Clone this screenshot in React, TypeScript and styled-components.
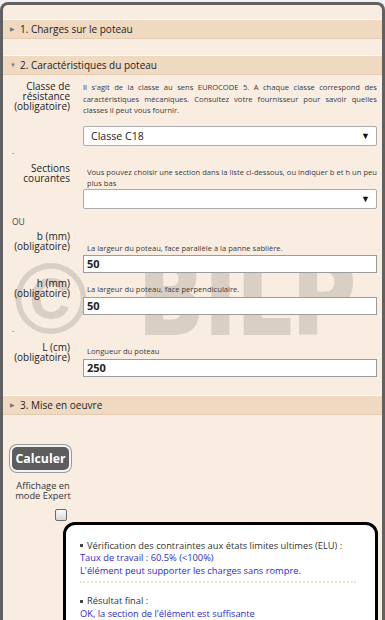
import styled, { createGlobalStyle } from 'styled-components'

const GlobalStyle = createGlobalStyle`
  html, body {
    margin: 0;
    padding: 0;
    background: #f2f2f2;
  }
  body {
    font-family: 'Open Sans', 'Liberation Sans', sans-serif;
    color: #333;
  }
`

const Frame = styled.div`
  position: relative;
  box-sizing: border-box;
  width: 385px;
  height: 618px;
  margin-top: 2px;
  padding-top: 14px;
  border: 3px solid #616161;
  border-bottom: none;
  border-radius: 8px 8px 0 0;
  background: #f9ede2;
  overflow: hidden;
`

// watermark lies behind the form fields
const Mark = styled.span<{
  $left: number
  $top: number
  $size: number
  $font: string
  $scale?: number
  $stroke?: number
}>`
  position: absolute;
  left: ${(p) => p.$left}px;
  top: ${(p) => p.$top}px;
  z-index: 0;
  font-family: ${(p) => p.$font}, sans-serif;
  font-weight: bold;
  font-size: ${(p) => p.$size}px;
  line-height: 1;
  color: #dacfc4;
  -webkit-text-stroke: ${(p) => p.$stroke ?? 0}px #dacfc4;
  transform: scaleX(${(p) => p.$scale ?? 1});
  transform-origin: left top;
  pointer-events: none;
`

const Content = styled.div`
  position: relative;
  z-index: 1;
`

const Header = styled.div<{ $gap?: number }>`
  display: flex;
  align-items: center;
  gap: 4px;
  height: 18px;
  margin-top: ${(p) => p.$gap ?? 0}px;
  padding-left: 7px;
  border-top: 1px solid #fff8f0;
  border-bottom: 1px solid #e4ccb2;
  background: #f0d9c1;
  font-size: 10px;
  color: #222;
`

const Arrow = styled.span`
  font-size: 6px;
  color: #777;
  width: 6px;
`

const Section = styled.div`
  padding: 6px 5px 18px 0;
`

const Row = styled.div<{ $top?: number }>`
  display: grid;
  grid-template-columns: 67px 1fr;
  column-gap: 13px;
  margin-top: ${(p) => p.$top ?? 0}px;
`

const Label = styled.div`
  text-align: right;
  font-size: 10px;
  line-height: 10px;
  color: #222;
`

const Field = styled.div`
  display: flex;
  flex-direction: column;
`

const Desc = styled.div<{ $pad?: number; $gap: number; $top?: number; $lh?: number }>`
  padding-left: ${(p) => p.$pad ?? 0}px;
  margin-top: ${(p) => p.$top ?? 0}px;
  margin-bottom: ${(p) => p.$gap}px;
  font-size: 7.6px;
  line-height: ${(p) => p.$lh ?? 11}px;
  color: #3a3a3a;
  text-align: justify;
`

const SelectBox = styled.div`
  box-sizing: border-box;
  display: flex;
  align-items: center;
  justify-content: space-between;
  height: 20px;
  padding: 0 6px 0 7px;
  border: 1px solid #ababab;
  border-radius: 2px;
  background: #fff;
  font-size: 10.6px;
  color: #222;
`

const Caret = styled.span`
  font-size: 9px;
  color: #111;
`

const TextInput = styled.input`
  box-sizing: border-box;
  width: 100%;
  height: 18px;
  margin: 0;
  padding: 0 3px;
  border: 1px solid #9c9c9c;
  background: #fff;
  font-family: 'Open Sans', sans-serif;
  font-weight: bold;
  font-size: 11px;
  color: #222;
  outline: none;
`

const Note = styled.div<{ $top?: number }>`
  margin-top: ${(p) => p.$top ?? 0}px;
  padding-left: 9px;
  font-size: 8.5px;
  line-height: 10px;
  color: #444;
`

const Bottom = styled.div`
  display: grid;
  grid-template-columns: 60px 1fr;
  padding: 30px 4px 0 0;
`

const Side = styled.div`
  display: flex;
  flex-direction: column;
  align-items: flex-start;
`

const CalcButton = styled.button`
  box-sizing: border-box;
  width: 61px;
  height: 27px;
  margin-left: 7px;
  padding: 0;
  border: 2px solid #f4f4f4;
  border-radius: 7px;
  box-shadow: 0 0 0 1px #9a9a9a;
  background: #5d5d5d;
  color: #fff;
  font-family: 'Open Sans', sans-serif;
  font-weight: bold;
  font-size: 12.3px;
`

const SideText = styled.div`
  width: 80px;
  margin-top: 9px;
  text-align: center;
  font-size: 9.3px;
  line-height: 10px;
  color: #333;
`

const Check = styled.span`
  box-sizing: border-box;
  width: 12px;
  height: 12px;
  margin: 8px 0 0 52px;
  border: 1px solid #6a6a6a;
  border-radius: 2px;
  background: linear-gradient(#fafafa, #d8d8d8);
`

const Result = styled.div`
  margin-top: 77px;
  padding: 15px 14px 10px 14px;
  border: 3px solid #000;
  border-radius: 12px;
  background: #fff;
  font-size: 9.3px;
  line-height: 12.5px;
  color: #333;
`

const Bullet = styled.span`
  display: inline-block;
  width: 3px;
  height: 3px;
  margin: 0 4px 1px 0;
  background: #444;
  vertical-align: middle;
`

const Blue = styled.div`
  color: #2d2dc0;
`

const Dotted = styled.div`
  margin: 4px 5px 12px 0;
  border-top: 2px dotted #f1e3d2;
`

export default function App() {
  return (
    <>
      <GlobalStyle />
      <Frame>
        <Mark $left={11} $top={243} $size={100} $font="'Liberation Sans'">
          ©
        </Mark>
        <Mark $left={135} $top={240} $size={106} $scale={0.82} $stroke={2} $font="'DejaVu Sans'">
          BILP
        </Mark>
        <Content>
          <Header>
            <Arrow>▶</Arrow>1. Charges sur le poteau
          </Header>
          <Header $gap={16}>
            <Arrow>▼</Arrow>2. Caractéristiques du poteau
          </Header>
          <Section>
            <Row>
              <Label>
                Classe de
                <br />
                résistance
                <br />
                (obligatoire)
              </Label>
              <Field>
                <Desc $gap={9} $top={1} $lh={11.5}>
                  Il s'agit de la classe au sens EUROCODE 5. A chaque classe correspond des
                  caractéristiques mécaniques. Consultez votre fournisseur pour savoir quelles
                  classes il peut vous fournir.
                </Desc>
                <SelectBox>
                  Classe C18
                  <Caret>▼</Caret>
                </SelectBox>
              </Field>
            </Row>
            <Note>.</Note>
            <Row $top={7}>
              <Label>
                Sections
                <br />
                courantes
              </Label>
              <Field>
                <Desc $gap={0} $pad={4} $top={4}>
                  Vous pouvez choisir une section dans la liste ci-dessous, ou indiquer b et h un
                  peu plus bas
                </Desc>
                <SelectBox>
                  <span />
                  <Caret>▼</Caret>
                </SelectBox>
              </Field>
            </Row>
            <Note $top={8}>OU</Note>
            <Row $top={4}>
              <Label>
                b (mm)
                <br />
                (obligatoire)
              </Label>
              <Field>
                <Desc $gap={1} $pad={4} $top={12}>
                  La largeur du poteau, face parallèle à la panne sablière.
                </Desc>
                <TextInput defaultValue="50" />
              </Field>
            </Row>
            <Row $top={5}>
              <Label>
                h (mm)
                <br />
                (obligatoire)
              </Label>
              <Field>
                <Desc $gap={2} $pad={4} $top={6}>
                  La largeur du poteau, face perpendiculaire.
                </Desc>
                <TextInput defaultValue="50" />
              </Field>
            </Row>
            <Note $top={9}>.</Note>
            <Row $top={8}>
              <Label>
                L (cm)
                <br />
                (obligatoire)
              </Label>
              <Field>
                <Desc $gap={2} $pad={4} $top={4}>
                  Longueur du poteau
                </Desc>
                <TextInput defaultValue="250" />
              </Field>
            </Row>
          </Section>
          <Header>
            <Arrow>▶</Arrow>3. Mise en oeuvre
          </Header>
          <Bottom>
            <Side>
              <CalcButton>Calculer</CalcButton>
              <SideText>
                Affichage en
                <br />
                mode Expert
              </SideText>
              <Check />
            </Side>
            <Result>
              <div>
                <Bullet />
                Vérification des contraintes aux états limites ultimes (ELU) :
              </div>
              <Blue>Taux de travail : 60.5% (&lt;100%)</Blue>
              <Blue>L'élément peut supporter les charges sans rompre.</Blue>
              <Dotted />
              <div>
                <Bullet />
                Résultat final :
              </div>
              <Blue>OK, la section de l'élément est suffisante</Blue>
            </Result>
          </Bottom>
        </Content>
      </Frame>
    </>
  )
}
